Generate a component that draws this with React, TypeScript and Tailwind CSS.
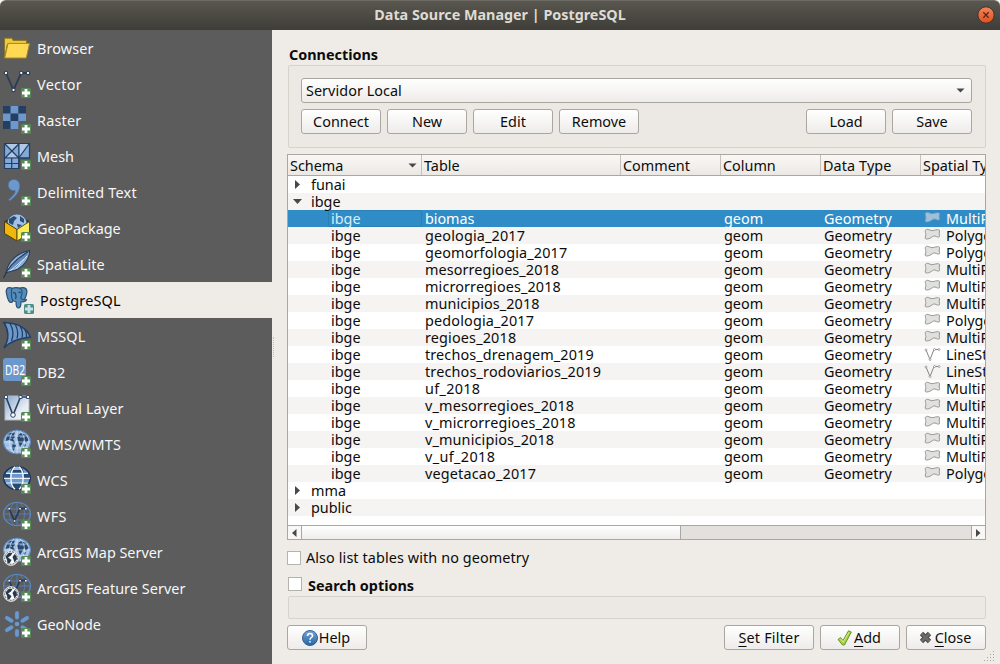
import React from "react";

const DARK = "#243f62";
const BLUE = "#6d98cb";

function Plus({ x = 21, fill = "#568a57" }: { x?: number; fill?: string }) {
  return (
    <g transform={`translate(${x} 22)`}>
      <rect width="10" height="10" rx="1.5" fill={fill} />
      <path d="M5 1V9M1 5H9" stroke={x > 21 ? "#c4e4ea" : "#fff"} strokeWidth="2.800" />
    </g>
  );
}

function CoverageGlobe() {
  return (
    <g>
      <ellipse cx="17" cy="16" rx="13.300" ry="11.500" fill={BLUE} stroke="#1f3552" strokeWidth="1.500" />
      <path d="M11.500 6.500Q17 3.500 22.500 6.500L24 11H10ZM4.500 11.500H10V16H3.800ZM24 11.500H29.500L30.200 16H24ZM10.500 21H23.500L20.500 27H13.500Z" fill="#284a72" />
      <path d="M14 5Q17 4 20 5L21.500 8H12.500Z" fill="#9dbde2" />
      <path d="M6 11.300H28M4 16.300H30M6 21H28" stroke="#e6eff9" strokeWidth="1.200" />
      <path d="M15 4.800C9.500 9 9.500 23 15 27.300M19 4.800C24.500 9 24.500 23 19 27.300" fill="none" stroke="#fff" strokeWidth="1.300" />
    </g>
  );
}

function MapGlobe() {
  return (
    <g>
      <ellipse cx="17" cy="16" rx="13.400" ry="11.600" fill="#a3c1e4" stroke="#5f8cc4" strokeWidth="1.200" />
      <path d="M7 10L10 7L15 6.500L14 9L15 11L13 13L15 16L14 18L12 15L9 14L5.500 15ZM18 9L21 7L26 9L28.500 14L26 17L24 14L22 18L20 21L18 15L17 12ZM12.500 18L16 19L15 22L13.500 25L12 22ZM23 19L26 18L25 21Z" fill="#284a72" />
      <path d="M8.500 9.500L12 8.500M20 11H25M10 12L12 12.500" stroke="#7fa6d6" strokeWidth="1" />
      <path d="M6 10H28M3.800 16H30M6 22H28M17 4.500V27.500M14 5C8 10 8 22 14 27M20 5C26 10 26 22 20 27" fill="none" stroke="#e3edf8" strokeWidth=".6" />
    </g>
  );
}

function FeatureGlobe() {
  return (
    <g>
      <path
        d="M6 11H28M3.600 16H30.400M6 22H28M17 4.500V27.500M14 5C8 10 8 22 14 27M20 5C26 10 26 22 20 27"
        fill="none"
        stroke="#5480b8"
        strokeWidth=".9"
      />
      <ellipse cx="17" cy="16" rx="13.400" ry="11.600" fill="none" stroke="#5785c0" strokeWidth="1.400" />
      <path d="M9 10.500L14.500 23L20 10.500H26" fill="none" stroke="#293b55" strokeWidth="1.800" />
      <path d="M8.500 10h1.500v1.500H8.500zM13.800 22.200h1.500v1.500h-1.500zM19.300 10h1.500v1.500h-1.500zM25 10h1.500v1.500H25z" fill="#fff" />
    </g>
  );
}

function SmallGlobe() {
  return (
    <g>
      <circle cx="11" cy="24" r="7.400" fill="#fafafa" stroke="#d5d5d5" strokeWidth="1" />
      <circle cx="11" cy="24" r="6.300" fill="none" stroke="#333" strokeWidth="0.8" strokeDasharray="2 1" />
      <path d="M5.500 22.500L8.500 19L12.500 18.800L11 21.500L8 23.500L11.500 26L9.500 29.500L7.500 29L7 26ZM12.500 23L14.500 20L16.500 22L17 25L14.500 28.500L13.500 25.500Z" fill="#26384d" />
    </g>
  );
}

function SourceIcon({ name }: { name: string }) {
  let art: React.ReactNode = null;
  switch (name) {
    case "Browser":
      art = (
        <>
          <path d="M4.500 28V8.200H12L13 10.400H26.500V14H7.500Z" fill="#f0c93c" stroke="#8d7722" />
          <path d="M4.700 28L8 13.400H29.500L26.300 28Z" fill="#ffd954" stroke="#a58a25" />
        </>
      );
      break;
    case "Vector":
      art = (
        <>
          <path d="M6 7L13.500 24L21.300 7H28" fill="none" stroke="#2c3d54" strokeWidth="1.8" />
          {[[6, 7], [13.5, 24], [21.3, 7], [28, 7]].map(([x, y]) => (
            <circle key={x} cx={x} cy={y} r="1.700" fill="#fff" stroke="#2c3d54" strokeWidth="1.100" />
          ))}
        </>
      );
      break;
    case "Raster":
      art = (
        <>
          <path d="M3 4H26V19H18.300V27H3Z" fill={BLUE} />
          <path d="M3 4h7.500v7.500H3zM18.300 4H26v7.500h-7.700zM10.500 11.500h7.800V19h-7.800zM3 19h7.500v8H3z" fill={DARK} />
        </>
      );
      break;
    case "Mesh":
      art = (
        <>
          <path d="M4.500 5.500H29.500V20H19V30.500H4.500Z" fill="#82a9d8" stroke={DARK} strokeWidth="1.200" />
          <path d="M5 6H18L12 12.500ZM6 19L12 13L18 19ZM20 6H28L20 17Z" fill="#afc8e6" />
          <path d="M18.800 5.500V31M4.500 20H29.500M5 6L18.800 20M18.800 6L5 20M29 6L19.500 19M11.700 20V31M4.500 25.500H19" fill="none" stroke={DARK} strokeWidth="1.200" />
        </>
      );
      break;
    case "Delimited Text":
      art = <path d="M8.200 11.500C8 7 12 4.300 16 5.800C22.500 8.600 21 19.500 9.500 27L8.700 25.500C14 21 15.500 18.700 15 16.500C11.500 17.300 8.500 15 8.200 11.500Z" fill={BLUE} stroke="#496e9d" strokeWidth=".8" />;
      break;
    case "GeoPackage":
      art = (
        <>
          <path d="M4.500 11L17 5L29.500 11L17 19Z" fill="#3a3422" />
          <circle cx="17" cy="14" r="10" fill="#a3c1e4" stroke="#405674" strokeWidth=".7" />
          <path d="M9 9L14 6L17 8L14 11L13 15L9 13ZM20 6L24 9L24 13L20 11ZM17 14L22 15L18 18Z" fill="#2b4c74" />
          <path d="M4.500 11.500L17 19.500V31L4.500 23.500Z" fill="#f0b60c" stroke="#4e3d04" />
          <path d="M29.500 11.500L17 19.500V31L29.500 23.500Z" fill="#f9ee5a" stroke="#5c5410" />
        </>
      );
      break;
    case "SpatiaLite":
      art = (
        <>
          <path d="M6 27C8 16 16 7.500 29.500 4.500C30 11 25 19 18 23C13 25.500 9 25 6 27Z" fill="#8fb2dc" stroke="#273e5b" strokeWidth="1.100" />
          <path d="M9 24C13 17 19 11 28 6.500C26.500 12 22 18 16 21.500Z" fill="#5f89bd" />
          <path d="M8.500 22L22 9.500M10.500 24.500L24 13M16 22.500L27 10" stroke="#dce8f5" strokeWidth="1" />
          <path d="M3.500 32C7 23 14 14 28.500 5.500" fill="none" stroke="#223851" strokeWidth="1.200" />
        </>
      );
      break;
    case "PostgreSQL":
      art = (
        <g fill="#548cbd" stroke="#2b5276" strokeWidth="1.200" strokeLinejoin="round">
          <path d="M12 6C7 4.500 5.500 7 6.600 12C7.500 16.500 9 20.500 11 20.500C12.300 20.500 13 19 13.500 17Z" />
          <path d="M20 6C25 4.500 28 7 26.500 12C25.500 16 23.500 19.500 22 19.500C20.500 19.500 19.500 18 19.500 16Z" />
          <path d="M11.500 7C13 5 19.500 5 21.500 7.500C23 10.500 21.500 14 20.700 16C22 18.500 25 18 26.500 17.700C25.500 20 22.500 20 21 19.500C21 24 20.500 26 18.500 26C16 26 16 23 16 19.500C13 19.800 11.500 17 11.500 14Z" />
          <path d="M13 11Q14.500 10 15.500 11.500Q16.500 15 15.500 17M18.500 10.500Q20 9.500 20.500 11" fill="none" stroke="#244763" />
        </g>
      );
      break;
    case "MSSQL":
      art = (
        <>
          <path d="M4 4.500C16 5 26 8 30.300 19C21 20 11 22 4 30C9 22 9 13 4 4.500Z" fill={BLUE} stroke={DARK} strokeWidth="1.500" />
          <path d="M10 5.500Q15 14 11.500 23M15.500 7Q19 14 17 20.500M20.500 9Q23.500 14.500 22 19.500M25 12Q27 15 26.500 19" fill="none" stroke={DARK} strokeWidth="1.300" />
        </>
      );
      break;
    case "DB2":
      art = (
        <>
          <rect x="3" y="4" width="23" height="23" rx="3" fill={BLUE} />
          <text x="5" y="20.500" fill="#fff" fontSize="14" textLength="20" lengthAdjust="spacingAndGlyphs" fontFamily="Noto Sans, sans-serif">DB2</text>
        </>
      );
      break;
    case "Virtual Layer":
      art = (
        <>
          <defs>
            <linearGradient id="vl" x1="0" y1="0" x2="1" y2="1">
              <stop stopColor="#86a7d0" />
              <stop offset=".65" stopColor="#e9eef5" />
            </linearGradient>
          </defs>
          <rect x="5" y="6" width="24" height="24" fill="url(#vl)" stroke="#aeb8c4" />
          <path d="M6 7L13 25L20.500 7H28" fill="none" stroke="#2b4260" strokeWidth="1.600" />
          <path d="M4.500 5.500h3v3h-3zM19 5.500h3v3h-3zM26.500 5.500h3v3h-3z" fill="#fff" stroke="#2b4260" strokeWidth=".9" />
          <circle cx="13" cy="25" r="2.300" fill="#fff" stroke="#2b4260" />
        </>
      );
      break;
    case "WMS/WMTS":
      art = <MapGlobe />;
      break;
    case "WCS":
      art = <CoverageGlobe />;
      break;
    case "WFS":
      art = <FeatureGlobe />;
      break;
    case "ArcGIS Map Server":
      art = (
        <>
          <MapGlobe />
          <SmallGlobe />
        </>
      );
      break;
    case "ArcGIS Feature Server":
      art = (
        <>
          <FeatureGlobe />
          <SmallGlobe />
        </>
      );
      break;
    case "GeoNode":
      art = (
        <>
          <path d="M17 7V11.500M17 25V29M7 12L11.500 14.700M27 12L22.500 14.700M7 24L11.500 21.300M27 24L22.500 21.300" stroke="#4c74a6" strokeWidth="4.600" strokeLinecap="round" />
          <path d="M17 7V11.500M17 25V29M7 12L11.500 14.700M27 12L22.500 14.700M7 24L11.500 21.300M27 24L22.500 21.300" stroke={BLUE} strokeWidth="3.600" strokeLinecap="round" />
          <circle cx="17" cy="18" r="2.300" fill={BLUE} />
        </>
      );
      break;
  }
  return (
    <svg className="h-9 w-9 shrink-0" viewBox="0 0 36 36">
      {art}
      {name === "PostgreSQL" ? <Plus x={24} fill="#4d8f86" /> : name !== "Browser" && <Plus />}
    </svg>
  );
}

const sources: [string, string][] = [
  ["Browser", "tracking-[0.12px]"],
  ["Vector", "tracking-[0.3px]"],
  ["Raster", "tracking-[0.2px]"],
  ["Mesh", "tracking-normal"],
  ["Delimited Text", "tracking-[0.22px]"],
  ["GeoPackage", "tracking-normal"],
  ["SpatiaLite", "tracking-[0.15px]"],
  ["PostgreSQL", "tracking-[0.2px]"],
  ["MSSQL", "tracking-[0.15px]"],
  ["DB2", "tracking-[0.1px]"],
  ["Virtual Layer", "tracking-[0.13px]"],
  ["WMS/WMTS", "tracking-[0.28px]"],
  ["WCS", "tracking-[0.2px]"],
  ["WFS", "tracking-[0.3px]"],
  ["ArcGIS Map Server", "tracking-normal"],
  ["ArcGIS Feature Server", "tracking-[0.05px]"],
  ["GeoNode", "tracking-normal"],
];

type Kind = "MultiPolygon" | "Polygon" | "LineString";
const layers: [string, Kind, string][] = [
  ["biomas", "MultiPolygon", "tracking-[-0.05px]"],
  ["geologia_2017", "Polygon", "tracking-[0.16px]"],
  ["geomorfologia_2017", "Polygon", "tracking-[0.14px]"],
  ["mesorregioes_2018", "MultiPolygon", "tracking-[0.1px]"],
  ["microrregioes_2018", "MultiPolygon", "tracking-[0.12px]"],
  ["municipios_2018", "MultiPolygon", "tracking-[0.1px]"],
  ["pedologia_2017", "Polygon", "tracking-[0.16px]"],
  ["regioes_2018", "MultiPolygon", "tracking-[0.16px]"],
  ["trechos_drenagem_2019", "LineString", "tracking-[0.13px]"],
  ["trechos_rodoviarios_2019", "LineString", "tracking-[0.17px]"],
  ["uf_2018", "MultiPolygon", "tracking-[0.3px]"],
  ["v_mesorregioes_2018", "MultiPolygon", "tracking-[0.16px]"],
  ["v_microrregioes_2018", "MultiPolygon", "tracking-[0.16px]"],
  ["v_municipios_2018", "MultiPolygon", "tracking-[0.14px]"],
  ["v_uf_2018", "MultiPolygon", "tracking-[0.38px]"],
  ["vegetacao_2017", "Polygon", "tracking-[0.18px]"],
];

function GeometryIcon({ kind, selected }: { kind: Kind; selected: boolean }) {
  return (
    <svg className="mr-[5px] h-[17px] w-[17px] shrink-0" viewBox="0 0 17 17">
      {kind === "LineString" ? (
        <>
          <path d="M2 4L6 13.500L10 3.500H14.500" fill="none" stroke="#777" strokeWidth=".9" />
          <g fill="#fff" stroke="#888" strokeWidth=".7">
            <circle cx="2" cy="4" r="1" />
            <circle cx="6" cy="13.500" r="1" />
            <circle cx="10.500" cy="3.500" r="1" />
            <circle cx="15" cy="3.500" r="1" />
          </g>
        </>
      ) : (
        <path
          d="M1.300 4.500C1 2 3.500 1.800 6 3.200C8.500 4.500 11 2.700 13.500 2.700C15.600 2.700 16 3.500 15.400 5C15 6.500 15.200 7.500 15.600 8.700C15.800 10.600 13.800 10.300 12.300 9.500C10 8.300 9 9.300 7.200 10.500C5.500 11.800 3.500 12 2.200 12C.8 11.800 1.200 10.300 1.700 8.800C2.200 7.300 1.500 6 1.300 4.500Z"
          fill={selected ? "#a0bfd8" : "#e0e0de"}
          stroke={selected ? "#6e9bc0" : "#8c8c8a"}
          strokeWidth=".9"
        />
      )}
    </svg>
  );
}

const button = "flex h-[25px] items-center justify-center rounded-[3px] border border-[#aaa6a2] bg-linear-to-b from-white to-[#eeecea]";

function Button({ children, className = "w-20" }: { children: React.ReactNode; className?: string }) {
  return <button className={`${button} ${className}`}>{children}</button>;
}

function Mnemonic({ letter, rest }: { letter: string; rest: string }) {
  return (
    <span>
      <u className="decoration-1 underline-offset-[3px] [text-decoration-skip-ink:none]">{letter}</u>
      {rest}
    </span>
  );
}

function Branch({ open }: { open?: boolean }) {
  return (
    <svg className="mr-[5px] h-[17px] w-[18px] shrink-0" viewBox="0 0 18 17">
      <path d={open ? "M5 6H14L9.500 11Z" : "M7 4V13L12 8.500Z"} fill="#484848" />
    </svg>
  );
}

function GroupRow({ name, open, shade }: { name: string; open?: boolean; shade?: boolean }) {
  return (
    <div className={`flex h-[17px] items-center ${shade ? "bg-[#f5f4f2]" : "bg-white"}`}>
      <Branch open={open} />
      <span>{name}</span>
    </div>
  );
}

const head = "flex h-full shrink-0 items-center border-r border-[#c4c0bb] pl-[2px]";

export default function App() {
  return (
    <div className="flex h-[664px] w-[1000px] flex-col overflow-hidden bg-[#efebe6] font-['Noto_Sans',sans-serif] text-[14.4px] leading-[17px] whitespace-nowrap text-[#0c0c0c]">
      <div className="bg-[#f4f4f4]">
        <header className="grid h-[30px] grid-cols-[40px_1fr_40px] items-center rounded-t-[6px] border-t border-[#6c6a62] bg-linear-to-b from-[#59574f] to-[#3e3d38]">
          <span />
          <h1 className="pb-[2px] text-center text-[14.35px] font-bold text-[#dfdbd2]">Data Source Manager | PostgreSQL</h1>
          <svg className="mb-px ml-[17px] h-[18px] w-[18px]" viewBox="0 0 18 18">
            <defs>
              <linearGradient id="close" x1="0" y1="0" x2="0" y2="1">
                <stop stopColor="#f3845c" />
                <stop offset="1" stopColor="#e2501c" />
              </linearGradient>
            </defs>
            <circle cx="9" cy="9" r="8.200" fill="url(#close)" stroke="#37352f" />
            <path d="M6.300 6.300L11.700 11.700M11.700 6.300L6.300 11.700" stroke="#5a2a18" strokeWidth="1.300" />
          </svg>
        </header>
      </div>
      <div className="flex min-h-0 flex-1">
        <nav className="w-[272px] shrink-0 bg-[#5c5c5c] text-[#f7f7f7]">
          {sources.map(([name, tracking]) => (
            <div key={name} className={`flex h-9 items-center ${name === "PostgreSQL" ? "gap-1 bg-[#efebe6] text-black" : "gap-px"}`}>
              <SourceIcon name={name} />
              <span className={`pt-px ${tracking}`}>{name}</span>
            </div>
          ))}
        </nav>
        <div className="flex w-[15px] shrink-0 items-center pl-px">
          <div className="h-[20px] w-[2px] border-l border-dotted border-[#c4c0ba]" />
        </div>
        <main className="flex w-[699px] shrink-0 flex-col pt-4">
          <h2 className="ml-[2px] font-bold">Connections</h2>
          <section className="mt-[2px] ml-px flex h-[83px] flex-col gap-[6px] rounded-[2px] border border-[#d6d3ce] bg-[#ece8e3] px-3 pt-3">
            <div className="mr-px flex h-[25px] items-center justify-between rounded-[3px] border border-[#aaa6a2] bg-linear-to-b from-white to-[#eeecea] pr-[6px] pl-1">
              <span className="tracking-[0.05px]">Servidor Local</span>
              <svg className="h-[5px] w-[9px]" viewBox="0 0 9 5"><path d="M0.500 .500H8.500L4.500 4.500Z" fill="#484848" /></svg>
            </div>
            <div className="flex gap-[6px] pr-px">
              <Button>Connect</Button>
              <Button>New</Button>
              <Button>Edit</Button>
              <Button>Remove</Button>
              <span className="flex-1" />
              <Button>Load</Button>
              <Button>Save</Button>
            </div>
          </section>
          <section className="mt-[6px] flex h-[386px] flex-col overflow-hidden border border-[#aaa6a2] bg-white">
            <div className="flex h-[21px] shrink-0 items-center border-b border-[#aaa6a2] bg-linear-to-b from-[#faf8f6] to-[#ebe8e4]">
              <div className={`${head} w-[134px] justify-between pr-1`}>
                <span>Schema</span>
                <svg className="h-[5px] w-[9px]" viewBox="0 0 9 5"><path d="M0.500 .500H8.500L4.500 4.500Z" fill="#484848" /></svg>
              </div>
              <div className={`${head} w-[199px]`}>Table</div>
              <div className={`${head} w-[100px]`}>Comment</div>
              <div className={`${head} w-[100px]`}>Column</div>
              <div className={`${head} w-[100px] tracking-[0.1px]`}>Data Type</div>
              <div className="pl-[2px]">Spatial Type</div>
            </div>
            <div className="h-[349px] shrink-0">
              <GroupRow name="funai" />
              <GroupRow name="ibge" open shade />
              {layers.map(([name, kind, tracking], i) => (
                <div
                  key={name}
                  className={`flex h-[17px] items-center ${i === 0 ? "bg-[#308cc6] text-white" : i % 2 ? "bg-[#f5f4f2]" : "bg-white"}`}
                >
                  <div className="w-10 shrink-0" />
                  <span className={`flex h-[17px] w-[94px] shrink-0 items-center border pl-[2px] ${i === 0 ? "rounded-[2px] border-[#2b80b6] text-[#d9ecf8]" : "border-transparent"}`}>ibge</span>
                  <span className={`w-[299px] shrink-0 pl-[3px] ${tracking}`}>{name}</span>
                  <span className="w-[100px] shrink-0 pl-[3px]">geom</span>
                  <span className="w-[100px] shrink-0 pl-[3px] tracking-[0.06px]">Geometry</span>
                  <span className="flex items-center pl-[3px]">
                    <GeometryIcon kind={kind} selected={i === 0} />
                    {kind}
                  </span>
                </div>
              ))}
              <GroupRow name="mma" />
              <GroupRow name="public" shade />
            </div>
            <div className="flex h-[14px] shrink-0 border-t border-[#aaa6a2] bg-[#e3e1dd]">
              <div className="flex w-[14px] items-center justify-center border-r border-[#aaa6a2] bg-[#f8f7f5] pr-px">
                <svg className="h-2 w-[5px]" viewBox="0 0 5 8"><path d="M4.500 0V8L0 4Z" fill="#484848" /></svg>
              </div>
              <div className="w-[379px] border-r border-[#aaa6a2] bg-linear-to-b from-white to-[#efedeb]" />
              <div className="flex-1" />
              <div className="flex w-[14px] items-center justify-center border-l border-[#aaa6a2] bg-[#f8f7f5]">
                <svg className="h-2 w-[5px]" viewBox="0 0 5 8"><path d="M0 0V8L4.500 4Z" fill="#484848" /></svg>
              </div>
            </div>
          </section>
          <label className="mt-[9px] flex h-[17px] items-center gap-[5px]">
            <span className="h-[14px] w-[14px] border border-[#b6b2ae] bg-white" />
            <span className="tracking-[0.1px]">Also list tables with no geometry</span>
          </label>
          <label className="mt-[11px] ml-px flex h-[17px] gap-[6px] font-bold">
            <span className="h-[14px] w-[14px] border border-[#b6b2ae] bg-white" />
            <span>Search options</span>
          </label>
          <div className="mt-[2px] ml-px h-[23px] rounded-[2px] border border-[#d6d3ce] bg-[#ece8e3]" />
          <footer className="mt-[6px] flex gap-[6px]">
            <Button>
              <svg className="mr-px -ml-[2px] h-4 w-4" viewBox="0 0 16 16">
                <defs>
                  <linearGradient id="help" x1="0" y1="0" x2="0" y2="1">
                    <stop stopColor="#79a5d4" />
                    <stop offset="1" stopColor="#2565a4" />
                  </linearGradient>
                </defs>
                <circle cx="8" cy="8" r="7.500" fill="url(#help)" stroke="#30619a" />
                <path d="M5.500 6Q5.500 3.600 8 3.600T10.500 5.900C10.500 7.500 8 7.600 8 9.700M8 11V12.600" fill="none" stroke="#fff" strokeWidth="1.500" />
              </svg>
              Help
            </Button>
            <span className="flex-1" />
            <Button className="w-[90px] tracking-[0.2px]"><Mnemonic letter="S" rest="et Filter" /></Button>
            <Button>
              <svg className="mr-[2px] -ml-[2px] h-4 w-[15px]" viewBox="0 0 15 16">
                <path d="M1 9.500L3.500 7.500L6 10.500L11.500 .800L14.300 2L7.500 15H5.500Z" fill="#a8d143" stroke="#5e8a24" strokeWidth=".9" strokeLinejoin="round" />
                <path d="M3.400 8.800L6.200 12L12 2.300" fill="none" stroke="#d7f08c" />
              </svg>
              <Mnemonic letter="A" rest="dd" />
            </Button>
            <Button>
              <svg className="mr-[3px] -ml-[2px] h-[13px] w-[13px]" viewBox="0 0 13 13">
                <path d="M2.500 2.500L10.500 10.500M10.500 2.500L2.500 10.500" stroke="#484848" strokeWidth="4.600" />
                <path d="M2.500 2.500L10.500 10.500M10.500 2.500L2.500 10.500" stroke="#6c6c6c" strokeWidth="2.600" />
              </svg>
              <Mnemonic letter="C" rest="lose" />
            </Button>
          </footer>
          <div className="mt-[1px] -mr-[9px] flex justify-end">
            <svg className="h-[10px] w-[11px]" viewBox="0 0 11 10">
              <path d="M9 0h1v1H9zM6 3h1v1H6zM9 3h1v1H9zM3 6h1v1H3zM6 6h1v1H6zM9 6h1v1H9zM0 9h1v1H0zM3 9h1v1H3zM6 9h1v1H6zM9 9h1v1H9z" fill="#aaa6a0" />
            </svg>
          </div>
        </main>
      </div>
    </div>
  );
}
